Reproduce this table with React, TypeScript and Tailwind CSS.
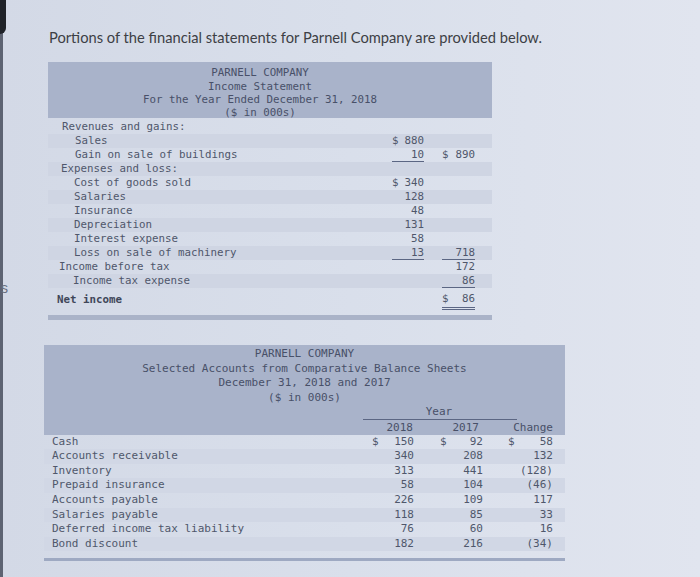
import React from 'react';

type IncomeRow = {
  label: string;
  indent: string;
  c1?: string;
  c1Dollar?: boolean;
  c2?: string;
  c2Dollar?: boolean;
  u1?: boolean;
  u2?: boolean;
  dark?: boolean;
};

const incomeRows: IncomeRow[] = [
  { label: 'Revenues and gains:', indent: 'pl-[14px]' },
  { label: 'Sales', indent: 'pl-[27px]', c1: '880', c1Dollar: true, dark: true },
  { label: 'Gain on sale of buildings', indent: 'pl-[27px]', c1: '10', c2: '890', c2Dollar: true, u1: true },
  { label: 'Expenses and loss:', indent: 'pl-[13px]', dark: true },
  { label: 'Cost of goods sold', indent: 'pl-[26px]', c1: '340', c1Dollar: true },
  { label: 'Salaries', indent: 'pl-[26px]', c1: '128', dark: true },
  { label: 'Insurance', indent: 'pl-[26px]', c1: '48' },
  { label: 'Depreciation', indent: 'pl-[26px]', c1: '131', dark: true },
  { label: 'Interest expense', indent: 'pl-[26px]', c1: '58' },
  { label: 'Loss on sale of machinery', indent: 'pl-[26px]', c1: '13', c2: '718', u1: true, u2: true, dark: true },
  { label: 'Income before tax', indent: 'pl-[11px]', c2: '172' },
  { label: 'Income tax expense', indent: 'pl-[25px]', c2: '86', u2: true, dark: true },
];

const balanceRows = [
  { label: 'Cash', a: '150', b: '92', c: '58', dollar: true },
  { label: 'Accounts receivable', a: '340', b: '208', c: '132' },
  { label: 'Inventory', a: '313', b: '441', c: '(128)' },
  { label: 'Prepaid insurance', a: '58', b: '104', c: '(46)' },
  { label: 'Accounts payable', a: '226', b: '109', c: '117' },
  { label: 'Salaries payable', a: '118', b: '85', c: '33' },
  { label: 'Deferred income tax liability', a: '76', b: '60', c: '16' },
  { label: 'Bond discount', a: '182', b: '216', c: '(34)' },
];

function Amount({ value, dollar }: { value?: string; dollar?: boolean }) {
  if (!value) return <span />;
  return (
    <span className={`flex ${dollar ? 'justify-between' : 'justify-end'}`}>
      {dollar && <span>$</span>}
      <span>{value}</span>
    </span>
  );
}

function IncomeStatement() {
  return (
    <div className="ml-[48px] w-[444px] font-['DejaVu_Sans_Mono',monospace] text-[10.8px] text-[#4f576b]">
      {/* Header */}
      <div className="h-[56px] bg-[#a9b3ca] pr-[20px] pt-[4px] text-center leading-[13.5px] text-[#485068]">
        <div>PARNELL COMPANY</div>
        <div>Income Statement</div>
        <div>For the Year Ended December 31, 2018</div>
        <div className="leading-[12px]">($ in 000s)</div>
      </div>

      <div className="pt-[2px]">
        {incomeRows.map((r) => (
          <div
            key={r.label}
            className={`grid h-[14px] grid-cols-[344px_32px_18px_33px_17px] items-center leading-[14px] ${
              r.dark ? 'bg-[#cfd5e3]' : ''
            }`}
          >
            <span className={`${r.indent} whitespace-pre`}>{r.label}</span>
            <span className={`h-[14px] ${r.u1 ? 'border-b border-[#5b6683]' : ''}`}>
              <Amount value={r.c1} dollar={r.c1Dollar} />
            </span>
            <span />
            <span className={`h-[14px] ${r.u2 ? 'border-b border-[#5b6683]' : ''}`}>
              <Amount value={r.c2} dollar={r.c2Dollar} />
            </span>
            <span />
          </div>
        ))}

        {/* Net income */}
        <div className="grid h-[22px] grid-cols-[344px_32px_18px_33px_17px] items-end">
          <span className="pb-[2px] pl-[9px] font-bold text-[#3f4659]">Net income</span>
          <span />
          <span />
          <span className="flex justify-between border-b-[3px] border-double border-[#5b6683] pb-[1px] leading-[14px]">
            <span>$</span>
            <span>86</span>
          </span>
          <span />
        </div>
      </div>

      <div className="mt-[5px] h-[5px] bg-[#aab3c8]" />
    </div>
  );
}

function BalanceSheet() {
  return (
    <div className="ml-[44px] mt-[25px] w-[521px] font-['DejaVu_Sans_Mono',monospace] text-[11px] text-[#4f576b]">
      {/* Header */}
      <div className="bg-[#a9b3ca] pt-[2px] text-[#485068]">
        <div className="text-center leading-[14.5px]">
          <div>PARNELL COMPANY</div>
          <div>Selected Accounts from Comparative Balance Sheets</div>
          <div>December 31, 2018 and 2017</div>
          <div>($ in 000s)</div>
        </div>
        <div className="flex h-[14.5px] leading-[14.5px]">
          <div className="w-[319px]" />
          <div className="w-[154px] border-b border-[#5b6683] pr-[2px] text-center">Year</div>
        </div>
        <div className="grid h-[15px] grid-cols-[328px_42px_26px_43px_25px_45px_12px] leading-[15px]">
          <span />
          <span className="pr-[1px] text-right">2018</span>
          <span />
          <span className="pr-[4px] text-right">2017</span>
          <span />
          <span className="text-right">Change</span>
          <span />
        </div>
      </div>

      {balanceRows.map((r, i) => (
        <div
          key={r.label}
          className={`grid h-[14.6px] grid-cols-[328px_42px_26px_43px_25px_45px_12px] items-center leading-[14.6px] ${
            i % 2 === 1 ? 'bg-[#d1d7e5]' : ''
          }`}
        >
          <span className="whitespace-pre pl-[8px]">{r.label}</span>
          <Amount value={r.a} dollar={r.dollar} />
          <span />
          <Amount value={r.b} dollar={r.dollar} />
          <span />
          <Amount value={r.c} dollar={r.dollar} />
          <span />
        </div>
      ))}

      <div className="mt-[7px] h-[3px] bg-[#9ea9c2]" />
    </div>
  );
}

export default function App() {
  return (
    <div className="relative h-[577px] w-[700px] overflow-hidden bg-gradient-to-r from-[#d3d9e6] via-[#d9dfeb] to-[#e1e5ef]">
      {/* photographed screen edge */}
      <div className="absolute left-0 top-0 h-full w-[3px] bg-[#5d6372]" />
      <div className="absolute left-0 top-0 h-[34px] w-[6px] rounded-br-[6px] bg-[#1f2228]" />
      <span className="absolute left-[1px] top-[278px] font-['Liberation_Sans',sans-serif] text-[14px] text-[#6a7080]">
        s
      </span>

      <div className="pt-[26px]">
        <p className="pl-[49px] font-['Lato',sans-serif] text-[14.7px] text-[#3d3f45]">
          Portions of the financial statements for Parnell Company are provided below.
        </p>
        <div className="mt-[14px]">
          <IncomeStatement />
        </div>
        <BalanceSheet />
      </div>
    </div>
  );
}
